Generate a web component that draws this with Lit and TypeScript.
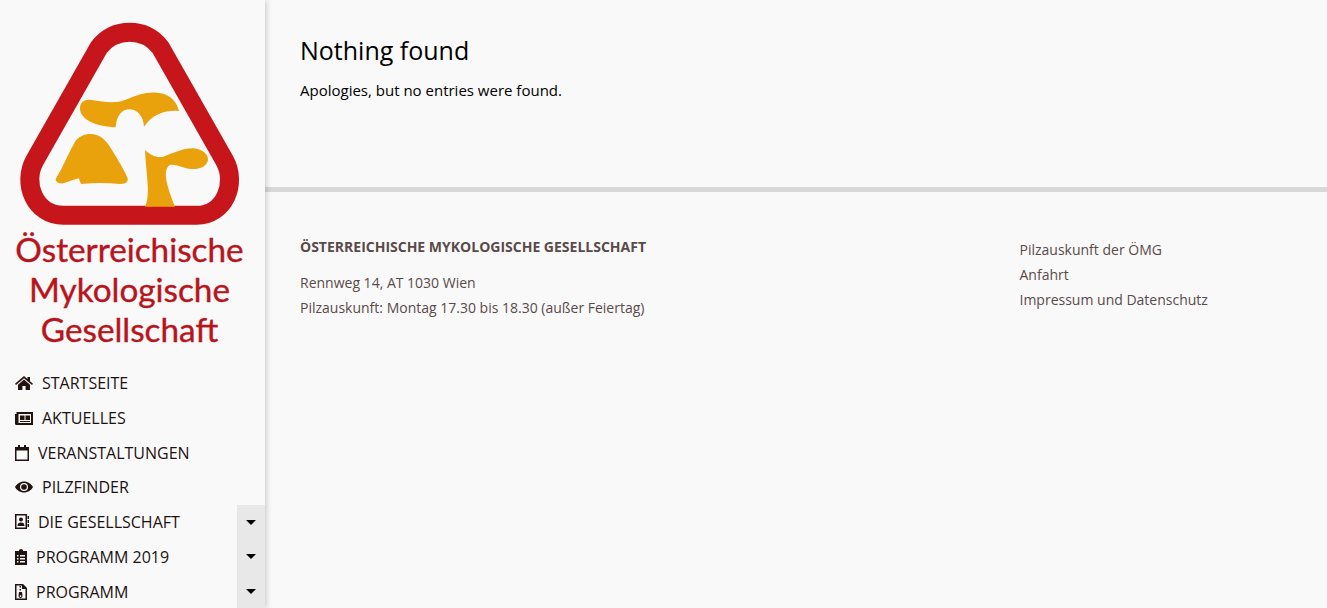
import { css, html, LitElement, svg } from 'lit';
import { customElement } from 'lit/decorators.js';

const ICONS = {
  home: {
    width: 18,
    body: svg`<path d="M9 2 12.5 5V3H15V7.2L18 9.8 17 11 9 4.2 1 11 0 9.8ZM9 5.6 15 10.7V16H10.6V12H7.4V16H3V10.7Z"/>`,
  },
  news: {
    width: 18,
    body: svg`<path fill-rule="evenodd" d="M1.5 3H18V16H1.5A1.5 1.5 0 0 1 0 14.5V5H1.5ZM3.5 5V14H16V5ZM5 6.5H9.5V11H5ZM10.5 6.5H15V11H10.5ZM5 12H15V13H5Z"/>`,
  },
  calendar: {
    width: 14,
    body: svg`<path fill-rule="evenodd" d="M3 1H5V3H9V1H11V3H14V17H0V3H3ZM1.5 6.5V15.5H12.5V6.5Z"/>`,
  },
  eye: {
    width: 18,
    body: svg`<path fill-rule="evenodd" d="M9 3.5C13 3.5 16.5 6 18 9 16.5 12 13 14.5 9 14.5S1.5 12 0 9C1.5 6 5 3.5 9 3.5ZM9 5A4 4 0 1 0 9 13 4 4 0 0 0 9 5ZM9 6.2A2.8 2.8 0 1 1 9 11.8 2.8 2.8 0 0 1 9 6.2Z"/>`,
  },
  contact: {
    width: 14,
    body: svg`<path fill-rule="evenodd" d="M0 1H12V16H0ZM1.5 2.5V14.5H10.5V2.5ZM6 4.5A2 2 0 1 1 6 8.5 2 2 0 0 1 6 4.5ZM2.5 13C2.5 10.5 3.8 9.5 6 9.5S9.5 10.5 9.5 13ZM12.5 3H14V6H12.5ZM12.5 7H14V10H12.5ZM12.5 11H14V14H12.5Z"/>`,
  },
  clipboard: {
    width: 12,
    body: svg`<path fill-rule="evenodd" d="M4 3V2.5A2 1.5 0 0 1 8 2.5V3H12V17H0V3ZM2 7V8.5H3.5V7ZM5 7V8.5H10V7ZM2 10V11.5H3.5V10ZM5 10V11.5H10V10ZM2 13V14.5H3.5V13ZM5 13V14.5H10V13Z"/>`,
  },
  file: {
    width: 12,
    body: svg`<path fill-rule="evenodd" d="M0 1H8L12 5V17H0ZM1.5 2.5V15.5H10.5V6H7V2.5ZM4.5 3H6V4.5H4.5ZM4.5 6H6V7.5H4.5ZM4 9H7L7.5 13A2 2 0 1 1 3.5 13ZM5.5 12.2A.9.9 0 1 0 5.5 14 .9.9 0 0 0 5.5 12.2Z"/>`,
  },
};

type IconName = keyof typeof ICONS;

interface NavItem {
  icon: IconName;
  label: string;
  gap: number;
  sub?: boolean;
}

const NAV: NavItem[] = [
  { icon: 'home', label: 'Startseite', gap: 9 },
  { icon: 'news', label: 'Aktuelles', gap: 9 },
  { icon: 'calendar', label: 'Veranstaltungen', gap: 9 },
  { icon: 'eye', label: 'Pilzfinder', gap: 9 },
  { icon: 'contact', label: 'Die Gesellschaft', gap: 9, sub: true },
  { icon: 'clipboard', label: 'Programm 2019', gap: 9, sub: true },
  { icon: 'file', label: 'Programm', gap: 9, sub: true },
];

@customElement('app-root')
export class AppRoot extends LitElement {
  static override styles = css`
    :host {
      display: grid;
      grid-template-columns: 265px 1fr;
      height: 100vh;
      overflow: hidden;
      background: #f9f9f9;
      font-family: 'Open Sans', sans-serif;
      color: #000;
    }

    .sidebar {
      display: flex;
      flex-direction: column;
      background: #f9f9f9;
      box-shadow: 2px 0 5px rgba(0, 0, 0, 0.16);
      z-index: 1;
      overflow: hidden;
    }

    .logo {
      display: block;
      width: 265px;
      height: 225px;
      flex: none;
    }

    /* Lato stands in for the logo's geometric face; the stroke adds its weight */
    .brand {
      margin: 4px 0 0;
      padding-right: 6px;
      font-family: Lato, sans-serif;
      font-weight: 400;
      font-size: 33.3px;
      line-height: 40px;
      text-align: center;
      color: #b8141c;
      -webkit-text-stroke: 0.4px #b8141c;
    }

    .nav {
      display: flex;
      flex-direction: column;
      margin: 16.6px 0 0;
      padding: 0;
      list-style: none;
    }

    .item {
      display: flex;
      align-items: center;
      height: 34.8px;
      flex: none;
      padding-left: 15px;
      font-size: 16px;
      color: #1d1111;
      text-transform: uppercase;
    }

    .item svg {
      height: 18px;
      flex: none;
      fill: #21130f;
    }

    .label {
      flex: 1;
    }

    .toggle {
      display: flex;
      align-items: center;
      justify-content: center;
      align-self: stretch;
      width: 28px;
      background: #e8e8e8;
    }

    .caret {
      width: 0;
      height: 0;
      border-left: 5.5px solid transparent;
      border-right: 5.5px solid transparent;
      border-top: 5.5px solid #000;
    }

    .main {
      min-width: 0;
    }

    .content {
      height: 187px;
      box-sizing: border-box;
      padding: 33px 35px 0;
    }

    h1 {
      margin: 0;
      font-size: 25px;
      font-weight: 400;
      line-height: 34px;
    }

    .content p {
      margin: 13px 0 0;
      font-size: 15px;
      line-height: 20px;
    }

    .footer {
      display: grid;
      grid-template-columns: 719.5px 1fr;
      border-top: 5px solid #d8d8d8;
      padding: 45px 35px 0;
      font-size: 14px;
      line-height: 25px;
      color: #5a4a4a;
    }

    .footer h2 {
      margin: 0 0 13px;
      font-size: 14px;
      font-weight: 700;
      line-height: 20px;
      text-transform: uppercase;
    }

    .footer p {
      margin: 0;
    }

    .links {
      margin: 0;
      padding: 0;
      list-style: none;
    }
  `;

  private renderLogo() {
    return html`<svg class="logo" viewBox="0 0 795 675" aria-hidden="true">
      <path
        d="M297 142C345 82 433 82 481 142L673 480C713 550 673 646 590 646H190C105 646 65 550 105 480Z"
        fill="none"
        stroke="#c6151b"
        stroke-width="57"
      />
      <g fill="#e9a20b">
        <path d="M240 325C240 305 255 297 275 300C310 305 345 312 375 300C410 285 440 275 470 278C505 280 530 300 537 333C500 330 460 340 432 380C430 350 415 330 390 328C365 328 350 345 347 382C310 380 280 372 262 360C248 350 240 340 240 325Z" />
        <path d="M168 535C190 500 205 460 225 425C240 405 265 398 290 405C315 412 330 440 345 465C360 490 375 515 383 535C385 548 375 552 360 552C320 548 280 548 245 552C238 548 240 538 235 535C215 540 195 552 180 550C170 548 165 542 168 535Z" />
        <path d="M435 450C450 465 470 475 490 470C520 460 545 445 580 445C610 447 625 465 624 480C620 500 600 508 575 507C550 505 525 490 510 495C498 500 495 520 500 545C505 570 515 595 525 620H435C445 600 445 570 442 540C440 510 436 480 435 450Z" />
      </g>
    </svg>`;
  }

  override render() {
    return html`
      <aside class="sidebar">
        ${this.renderLogo()}
        <div class="brand">Österreichische<br />Mykologische<br />Gesellschaft</div>
        <ul class="nav">
          ${NAV.map((item) => {
            const icon = ICONS[item.icon];
            return html`
              <li class="item">
                <svg
                  viewBox="0 0 ${icon.width} 18"
                  style="width:${icon.width}px;margin-right:${item.gap}px"
                >${icon.body}</svg>
                <span class="label">${item.label}</span>
                ${item.sub ? html`<span class="toggle"><span class="caret"></span></span>` : ''}
              </li>
            `;
          })}
        </ul>
      </aside>
      <main class="main">
        <section class="content">
          <h1>Nothing found</h1>
          <p>Apologies, but no entries were found.</p>
        </section>
        <footer class="footer">
          <div>
            <h2>Österreichische Mykologische Gesellschaft</h2>
            <p>Rennweg 14, AT 1030 Wien</p>
            <p>Pilzauskunft: Montag 17.30 bis 18.30 (außer Feiertag)</p>
          </div>
          <ul class="links">
            <li>Pilzauskunft der ÖMG</li>
            <li>Anfahrt</li>
            <li>Impressum und Datenschutz</li>
          </ul>
        </footer>
      </main>
    `;
  }
}
